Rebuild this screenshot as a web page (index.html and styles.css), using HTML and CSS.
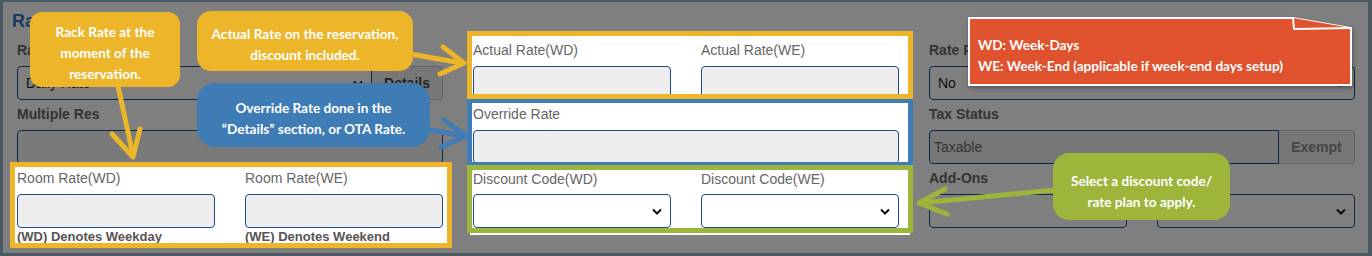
FILE: index.html
```html
<!DOCTYPE html>
<html lang="en">
<head>
  <meta charset="UTF-8">
  <meta name="viewport" content="width=device-width, initial-scale=1.0">
  <title>Rate Information</title>
  <link rel="stylesheet" href="styles.css">
</head>
<body>
  <div class="frame">
    <h2 class="section-title">Rate Information</h2>

    <div class="form-grid">
      <!-- left column -->
      <div class="col">
        <div class="field">
          <label>Rate Type</label>
          <div class="group">
            <div class="select">Daily Rate
              <svg class="chev" width="10" height="7" viewBox="0 0 10 7"><path d="M1 1.5 L5 5.5 L9 1.5"/></svg>
            </div>
            <button type="button" class="addon">Details</button>
          </div>
        </div>
        <div class="field">
          <label>Multiple Res</label>
          <input type="text" class="input input-light">
        </div>
        <div class="hl hl-yellow hl-room">
          <div class="pair">
            <div class="field">
              <label>Room Rate(WD)</label>
              <input type="text" class="input">
              <div class="hint">(WD) Denotes Weekday</div>
            </div>
            <div class="field">
              <label>Room Rate(WE)</label>
              <input type="text" class="input">
              <div class="hint">(WE) Denotes Weekend</div>
            </div>
          </div>
        </div>
      </div>

      <!-- middle column -->
      <div class="col">
        <div class="hl hl-yellow hl-actual">
          <div class="pair">
            <div class="field">
              <label>Actual Rate(WD)</label>
              <input type="text" class="input">
            </div>
            <div class="field">
              <label>Actual Rate(WE)</label>
              <input type="text" class="input">
            </div>
          </div>
        </div>
        <div class="hl hl-blue hl-override">
          <div class="field">
            <label>Override Rate</label>
            <input type="text" class="input">
          </div>
        </div>
        <div class="hl hl-green hl-discount">
          <div class="pair">
            <div class="field">
              <label>Discount Code(WD)</label>
              <div class="select">
                <span></span>
                <svg class="chev" width="10" height="7" viewBox="0 0 10 7"><path d="M1 1.5 L5 5.5 L9 1.5"/></svg>
              </div>
            </div>
            <div class="field">
              <label>Discount Code(WE)</label>
              <div class="select">
                <span></span>
                <svg class="chev" width="10" height="7" viewBox="0 0 10 7"><path d="M1 1.5 L5 5.5 L9 1.5"/></svg>
              </div>
            </div>
          </div>
        </div>
      </div>

      <!-- right column -->
      <div class="col">
        <div class="field">
          <label>Rate Protected</label>
          <div class="select">No
            <svg class="chev" width="10" height="7" viewBox="0 0 10 7"><path d="M1 1.5 L5 5.5 L9 1.5"/></svg>
          </div>
        </div>
        <div class="field">
          <label>Tax Status</label>
          <div class="group">
            <input type="text" class="input" value="Taxable">
            <button type="button" class="addon addon-exempt">Exempt</button>
          </div>
        </div>
        <div class="field">
          <label>Add-Ons</label>
          <div class="pair">
            <div class="select">
              <span></span>
              <svg class="chev" width="10" height="7" viewBox="0 0 10 7"><path d="M1 1.5 L5 5.5 L9 1.5"/></svg>
            </div>
            <div class="select">
              <span></span>
              <svg class="chev" width="10" height="7" viewBox="0 0 10 7"><path d="M1 1.5 L5 5.5 L9 1.5"/></svg>
            </div>
          </div>
        </div>
      </div>
    </div>

    <div class="dim"></div>

    <!-- annotations -->
    <div class="marks">
      <svg class="arrows" width="1372" height="256" viewBox="0 0 1372 256">
        <g fill="none" stroke-width="5" stroke-linecap="round" stroke-linejoin="round">
          <g stroke="#ecb52a">
            <path d="M118 86 L133 155"/>
            <path d="M112 134 L133 157 L140 129"/>
            <path d="M410 54 L462 63"/>
            <path d="M443 47 L464 63 L440 74"/>
          </g>
          <g stroke="#3f7cb6">
            <path d="M426 129 L464 136"/>
            <path d="M444 120 L466 136 L441 147"/>
          </g>
          <g stroke="#9db53b">
            <path d="M1055 190 L921 203"/>
            <path d="M945 189 L919 203 L947 214"/>
          </g>
        </g>
      </svg>

      <div class="callout c-rack">Rack Rate at the<br>moment of the<br>reservation.</div>
      <div class="callout c-actual">Actual Rate on the reservation,<br>discount included.</div>
      <div class="callout c-override">Override Rate done in the<br>“Details” section, or OTA Rate.</div>
      <div class="callout c-discount">Select a discount code/<br>rate plan to apply.</div>

      <div class="note">
        <svg class="note-shape" width="384" height="69" viewBox="0 0 384 69">
          <path d="M1 1 L325 1 L383 11 L383 68 L1 68 Z" fill="#e0512d" stroke="#fff" stroke-width="2"/>
          <path d="M325 1 L326 12 L383 11" fill="#e0512d" stroke="#fff" stroke-width="2" stroke-linejoin="round"/>
        </svg>
        <div class="note-text">WD: Week-Days<br>WE: Week-End (applicable if week-end days setup)</div>
      </div>
    </div>
  </div>
</body>
</html>
```

FILE: styles.css
```css
* {
  box-sizing: border-box;
}
body {
  margin: 0;
  font-family: "Liberation Sans", Arial, sans-serif;
  background: #fff;
}
.frame {
  position: relative;
  width: 1372px;
  height: 256px;
  border-style: solid;
  border-color: #4b5a62;
  border-width: 2px 4px 3px 3px;
  background: #fff;
}
.section-title {
  margin: 0;
  padding: 8px 0 0 9px;
  font-size: 18px;
  line-height: 22px;
  font-weight: bold;
  color: #2e74c4;
}
.form-grid {
  display: grid;
  grid-template-columns: repeat(3, 1fr);
  column-gap: 30px;
  align-items: start;
  margin-top: 9px;
  padding: 0 13px 0 14px;
}
.field {
  margin-bottom: 5px;
}
.field label {
  display: block;
  margin-bottom: 7px;
  font-size: 14px;
  line-height: 18px;
  font-weight: bold;
  color: #666;
  white-space: nowrap;
}
.input {
  display: block;
  width: 100%;
  height: 34px;
  padding: 0 4px;
  border: 1px solid #1c4c8c;
  border-radius: 4px;
  background: #eee;
  font: 14px "Liberation Sans", Arial, sans-serif;
  color: #666;
}
.input-light {
  background: #f4f4f4;
}
.select {
  display: flex;
  align-items: center;
  justify-content: space-between;
  height: 34px;
  padding: 0 8px;
  border: 1px solid #1c4c8c;
  border-radius: 4px;
  background: #fff;
  font-size: 14px;
  color: #222;
}
.chev path {
  fill: none;
  stroke: #111;
  stroke-width: 2;
}
.group {
  display: flex;
}
.group .select,
.group .input {
  flex: 1;
  border-radius: 4px 0 0 4px;
}
.addon {
  width: 71px;
  height: 34px;
  border: 1px solid #c4c4c4;
  border-left: none;
  border-radius: 0 4px 4px 0;
  background: #eee;
  font: bold 14px "Liberation Sans", Arial, sans-serif;
  color: #444;
}
.addon-exempt {
  width: 76px;
  color: #888;
}
.pair {
  display: grid;
  grid-template-columns: 1fr 1fr;
  column-gap: 30px;
}
.pair .field {
  margin-bottom: 0;
}
.hint {
  margin-top: 1px;
  font-size: 13px;
  line-height: 16px;
  font-weight: bold;
  color: #555;
  white-space: nowrap;
}

/* highlighted groups sit above the dim layer */
.hl {
  position: relative;
  z-index: 2;
  overflow: hidden;
  background: #fff;
  border: 5px solid;
}
.hl .field label {
  font-weight: normal;
}
.hl-yellow {
  border-color: #ecb52a;
}
.hl-blue {
  border-color: #3f7db8;
}
.hl-green {
  border-color: #9db53b;
}
.hl-room {
  height: 86px;
  margin: -7px -9px 0 -7px;
  padding: 2px 4px 0 2px;
}
.hl-actual {
  height: 68px;
  margin: -10px -14px 0 -6px;
  padding: 5px 9px 0 1px;
}
.hl-override {
  height: 66px;
  margin: 0 -14px 0 -6px;
  border-width: 4px 5px 3px;
  padding: 2px 9px 0 1px;
}
.hl-discount {
  height: 68px;
  margin: 0 -14px 0 -6px;
  padding: 0 9px 0 1px;
  box-shadow: 0 5px 0 -3px #fff;
}
.hl-discount .field label {
  margin-bottom: 6px;
}

.dim {
  position: absolute;
  top: 0;
  left: 0;
  right: 0;
  bottom: 0;
  z-index: 1;
  background: rgba(0, 0, 0, 0.5);
}

/* annotation layer, in picture coordinates */
.marks {
  position: absolute;
  left: -3px;
  top: -2px;
  width: 1372px;
  height: 256px;
  z-index: 3;
  pointer-events: none;
}
.arrows {
  position: absolute;
  left: 0;
  top: 0;
}
.callout {
  position: absolute;
  color: #fff;
  font-family: Lato, "Noto Sans", sans-serif;
  font-weight: bold;
  font-size: 13.6px;
  line-height: 21px;
  text-align: center;
  white-space: nowrap;
}
.c-rack {
  left: 30px;
  top: 12px;
  width: 150px;
  height: 75px;
  padding-top: 10px;
  border-radius: 12px;
  background: #ecb52a;
}
.c-actual {
  left: 197px;
  top: 11px;
  width: 216px;
  height: 60px;
  padding-top: 13px;
  border-radius: 14px;
  background: #ecb52a;
}
.c-override {
  left: 197px;
  top: 83px;
  width: 233px;
  height: 64px;
  padding-top: 15px;
  border-radius: 18px;
  background: #3f7cb6;
}
.c-discount {
  left: 1053px;
  top: 153px;
  width: 177px;
  height: 67px;
  padding-top: 18px;
  border-radius: 16px;
  background: #9db53b;
}
.note {
  position: absolute;
  left: 968px;
  top: 17px;
  width: 384px;
  height: 69px;
}
.note-shape {
  position: absolute;
  left: 0;
  top: 0;
  overflow: visible;
  filter: drop-shadow(1px 2px 2px rgba(0, 0, 0, 0.35));
}
.note-text {
  position: relative;
  padding: 18px 0 0 10px;
  color: #fff;
  font-family: Lato, "Noto Sans", sans-serif;
  font-weight: bold;
  font-size: 13.6px;
  line-height: 21px;
  white-space: nowrap;
}
```
